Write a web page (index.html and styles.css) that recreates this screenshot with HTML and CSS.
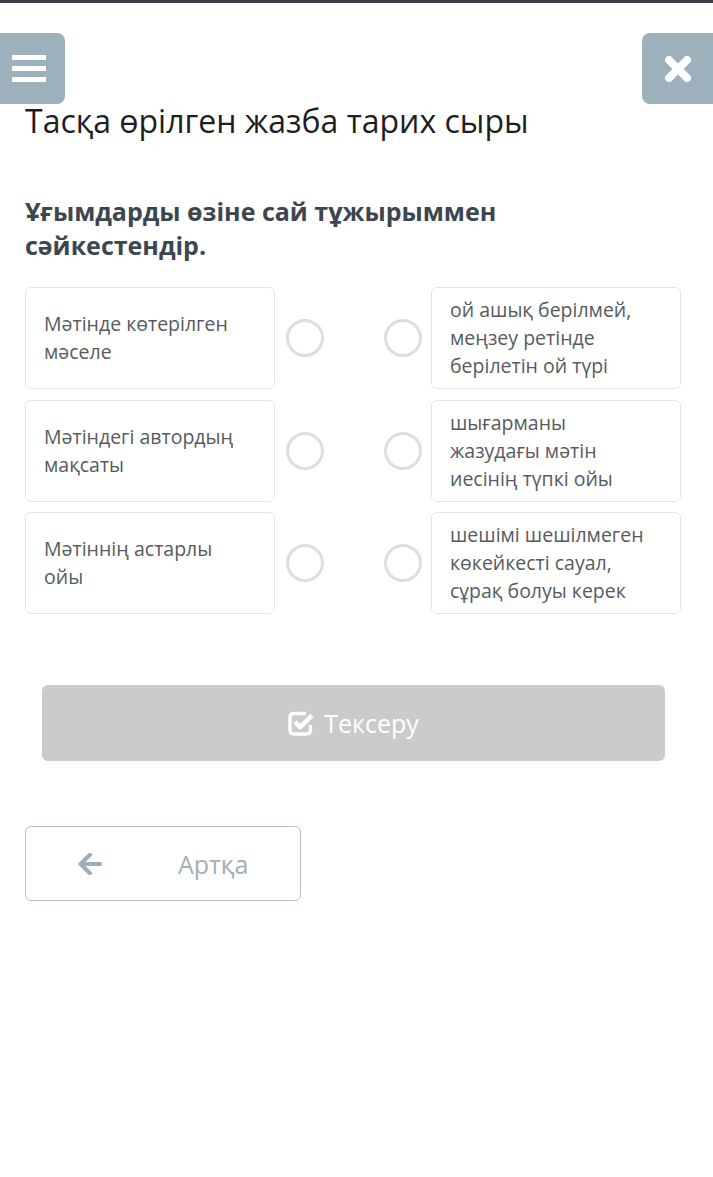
FILE: index.html
```html
<!DOCTYPE html>
<html lang="kk">

<head>
  <meta charset="UTF-8">
  <meta name="viewport" content="width=device-width, initial-scale=1.0">
  <title>Тасқа өрілген жазба тарих сыры</title>
  <link rel="stylesheet" href="styles.css">
</head>

<body>
  <div class="topBar"></div>

  <div class="header">
    <button class="iconBtn menuBtn" aria-label="menu">
      <svg width="34" height="27" viewBox="0 0 34 27">
        <rect x="0" y="0" width="34" height="5" fill="#fff" />
        <rect x="0" y="11" width="34" height="5" fill="#fff" />
        <rect x="0" y="22" width="34" height="5" fill="#fff" />
      </svg>
    </button>
    <button class="iconBtn closeBtn" aria-label="close">
      <svg width="28" height="28" viewBox="0 0 28 28">
        <path d="M5 5 L23 23 M23 5 L5 23" stroke="#fff" stroke-width="8" stroke-linecap="round" />
      </svg>
    </button>
  </div>

  <main class="container">
    <h1 class="title">Тасқа өрілген жазба тарих сыры</h1>
    <h2 class="task">Ұғымдарды өзіне сай тұжырыммен сәйкестендір.</h2>

    <div class="matchList">
      <div class="card">Мәтінде көтерілген мәселе</div>
      <div class="dots"><span class="dot"></span><span class="dot"></span></div>
      <div class="card answer">ой ашық берілмей, меңзеу ретінде берілетін ой түрі</div>

      <div class="card">Мәтіндегі автордың мақсаты</div>
      <div class="dots"><span class="dot"></span><span class="dot"></span></div>
      <div class="card answer">шығарманы жазудағы мәтін иесінің түпкі ойы</div>

      <div class="card">Мәтіннің астарлы ойы</div>
      <div class="dots"><span class="dot"></span><span class="dot"></span></div>
      <div class="card answer">шешімі шешілмеген көкейкесті сауал, сұрақ болуы керек</div>
    </div>

    <button class="checkBtn">
      <svg width="27" height="25" viewBox="0 0 27 25">
        <path d="M18 2.5 H6 Q2 2.5 2 6.5 V19 Q2 23 6 23 H18.5 Q22.5 23 22.5 19 V14" fill="none" stroke="#fff" stroke-width="3.4" />
        <path d="M7 11 L12.2 16.2 L24 4.5" fill="none" stroke="#fff" stroke-width="4.6" stroke-linejoin="round" />
      </svg>
      <span>Тексеру</span>
    </button>

    <button class="backBtn">
      <svg width="24" height="22" viewBox="0 0 448 420">
        <path fill="#9aafbb" d="M257.5 399.1l-22.2 22.2c-9.4 9.4-24.6 9.4-33.9 0L7 227c-9.4-9.4-9.4-24.6 0-33.9L201.4-1.3c9.4-9.4 24.6-9.4 33.9 0l22.2 22.2c9.5 9.5 9.3 25-.4 34.3L136.6 170H424c13.3 0 24 10.7 24 24v32c0 13.3-10.7 24-24 24H136.6l120.5 114.8c9.8 9.3 10 24.8.4 34.3z" />
      </svg>
      <span>Артқа</span>
    </button>
  </main>
</body>

</html>
```

FILE: styles.css
```css
html,
body {
  margin: 0;
  background-color: #fff;
  font-family: "Open Sans", "Noto Sans", sans-serif;
}

.topBar {
  height: 3px;
  background-color: #3a3e42;
}

.header {
  display: flex;
  justify-content: space-between;
  margin-top: 30px;
  height: 71px;
}

.iconBtn {
  border: none;
  padding: 0;
  height: 71px;
  background-color: #9db1bc;
  display: flex;
  align-items: center;
  justify-content: center;
  cursor: pointer;
}

.menuBtn {
  width: 65px;
  padding-right: 8px;
  border-radius: 0 8px 8px 0;
}

.closeBtn {
  width: 71px;
  border-radius: 8px 0 0 8px;
}

.container {
  padding: 0 32px 0 25px;
}

.title {
  margin: -2px 0 0;
  font-size: 32px;
  line-height: 38px;
  font-weight: 400;
  color: #1e1e1e;
}

.task {
  margin: 54px 0 0;
  font-size: 25px;
  line-height: 34px;
  font-weight: 700;
  color: #3d4650;
  width: 540px;
}

.matchList {
  margin-top: 25px;
  display: grid;
  grid-template-columns: 250px 1fr 250px;
  grid-auto-rows: 102px;
  row-gap: 10.5px;
}

.card {
  border: 1px solid #e3e6e8;
  border-radius: 6px;
  padding: 0 18px;
  display: flex;
  align-items: center;
  font-size: 19.5px;
  line-height: 28px;
  color: #565b5f;
}

.answer {
  padding-right: 28px;
}

.dots {
  display: flex;
  align-items: center;
  justify-content: space-between;
  padding: 0 9px 0 11px;
}

.dot {
  width: 32px;
  height: 32px;
  border: 3px solid #dedede;
  border-radius: 50%;
}

.checkBtn {
  margin: 71px 16px 0 17px;
  width: calc(100% - 33px);
  height: 76px;
  border: none;
  border-radius: 6px;
  background-color: #cbcbcb;
  color: #fff;
  font-family: inherit;
  font-size: 25px;
  display: flex;
  align-items: center;
  justify-content: center;
  gap: 9px;
}

.backBtn {
  margin-top: 65px;
  width: 276px;
  height: 75px;
  border: 1px solid #b3c1ca;
  border-radius: 6px;
  background-color: #fff;
  color: #9fb0ba;
  font-family: inherit;
  font-size: 25px;
  display: flex;
  align-items: center;
  padding: 0 0 0 52px;
  gap: 76px;
}
```
